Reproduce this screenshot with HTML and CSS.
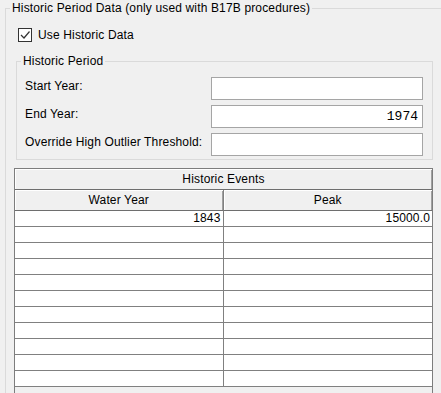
FILE: index.html
```html
<!DOCTYPE html>
<html lang="en">
<head>
    <meta charset="UTF-8">
    <title>Historic Period Data</title>
    <link rel="stylesheet" href="styles.css">
</head>
<body>
    <fieldset class="panel">
        <legend>Historic Period Data (only used with B17B procedures)</legend>
        <label class="check-row">
            <span class="check-box">
                <svg width="12" height="12" viewBox="0 0 12 12"><path d="M2 6 L5 9 L10.5 2.5" fill="none" stroke="#333" stroke-width="1.2"/></svg>
            </span>
            Use Historic Data
        </label>
        <fieldset class="period">
            <legend>Historic Period</legend>
            <div class="form-grid">
                <label for="startYear">Start Year:</label>
                <input type="text" id="startYear">
                <label for="endYear">End Year:</label>
                <input type="text" id="endYear" value="1974">
                <label for="threshold">Override High Outlier Threshold:</label>
                <input type="text" id="threshold">
            </div>
        </fieldset>
        <div class="events">
            <table>
                <thead>
                    <tr><th colspan="2" class="title">Historic Events</th></tr>
                    <tr><th class="col-year">Water Year</th><th>Peak</th></tr>
                </thead>
                <tbody>
                    <tr><td>1843</td><td>15000.0</td></tr>
                    <tr><td></td><td></td></tr>
                    <tr><td></td><td></td></tr>
                    <tr><td></td><td></td></tr>
                    <tr><td></td><td></td></tr>
                    <tr><td></td><td></td></tr>
                    <tr><td></td><td></td></tr>
                    <tr><td></td><td></td></tr>
                    <tr><td></td><td></td></tr>
                    <tr><td></td><td></td></tr>
                    <tr><td></td><td></td></tr>
                </tbody>
            </table>
        </div>
    </fieldset>
</body>
</html>
```
FILE: styles.css
```css
body {
    margin: 0;
    width: 441px;
    height: 393px;
    overflow: hidden;
    background-color: #f0f0f0;
    font-family: "Liberation Sans", Arial, sans-serif;
    font-size: 12px;
    letter-spacing: 0.15px;
    color: #000;
}
.panel {
    margin: 0 0 0 5px;
    padding: 0;
    width: 436px;
    box-sizing: border-box;
    min-width: 0;
    border: 1px solid #dadada;
    border-right: none;
}
.panel > legend {
    margin-left: 4px;
    padding: 0 2px;
    line-height: 16px;
}
.check-row {
    display: flex;
    align-items: center;
    gap: 6px;
    height: 16px;
    margin: 11px 0 0 12px;
}
.check-box {
    display: flex;
    align-items: center;
    justify-content: center;
    width: 14px;
    height: 14px;
    box-sizing: border-box;
    border: 1px solid #333;
    background-color: #fff;
}
.period {
    margin: 11px 0 0 10px;
    padding: 9px 9px 3px 8px;
    width: 417px;
    box-sizing: border-box;
    min-width: 0;
    border: 1px solid #dadada;
}
.period legend {
    margin-left: -4px;
    padding: 0 2px;
    line-height: 14px;
}
.form-grid {
    display: grid;
    grid-template-columns: 1fr 212px;
    row-gap: 5px;
    align-items: center;
}
.form-grid label {
    margin-bottom: 5px;
}
.form-grid input {
    box-sizing: border-box;
    width: 212px;
    height: 23px;
    margin: 0;
    padding: 0 4px;
    border: 1px solid #a5a5a5;
    background-color: #fff;
    text-align: right;
    font-family: "Liberation Mono", "Courier New", monospace;
    font-size: 13px;
    letter-spacing: 0;
    color: #000;
    outline: none;
}
.events {
    margin: 8px 0 0 8px;
    width: 419px;
    height: 240px;
    box-sizing: border-box;
    border: 1px solid #7d7d7d;
    border-bottom: none;
    background-color: #f0f0f0;
}
.events table {
    width: 417px;
    border-collapse: separate;
    border-spacing: 0;
    table-layout: fixed;
}
.events th {
    padding: 0;
    line-height: 20px;
    font-weight: normal;
    background-color: #f0f0f0;
    box-shadow: inset 1px 1px 0 #fff, inset -1px 0 0 #a0a0a0;
    border-bottom: 1px solid #6e6e6e;
}
.events th.col-year {
    width: 208px;
    border-right: 1px solid #808080;
}
.events td {
    padding: 0 2px;
    line-height: 15px;
    height: 15px;
    text-align: right;
    background-color: #fff;
    border-bottom: 1px solid #808080;
}
.events td:first-child {
    border-right: 1px solid #808080;
}
```
